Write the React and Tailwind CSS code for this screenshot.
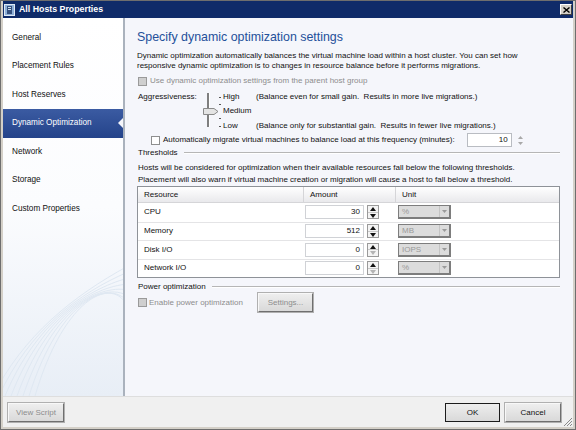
import React from "react";

const NAV = [
  "General",
  "Placement Rules",
  "Host Reserves",
  "Dynamic Optimization",
  "Network",
  "Storage",
  "Custom Properties",
];

const ROWS = [
  { name: "CPU", amount: "30", unit: "%", canDown: true },
  { name: "Memory", amount: "512", unit: "MB", canDown: true },
  { name: "Disk I/O", amount: "0", unit: "IOPS", canDown: false },
  { name: "Network I/O", amount: "0", unit: "%", canDown: false },
];

// ─── small pieces ───

function DisabledCheck() {
  return (
    <span className="inline-block w-[9px] h-[9px] border border-[#9a9a9a] bg-[#cfcfcf] shrink-0" />
  );
}

function Check() {
  return (
    <span className="inline-block w-[9px] h-[9px] border border-[#8e8f8f] bg-white shrink-0" />
  );
}

function Spinner({ canDown }) {
  return (
    <div className="w-[12px] h-[14px] flex flex-col border border-[#9a9a9a] bg-[#f4f4f4]">
      <div className="flex-1 flex items-center justify-center border-b border-[#c8c8c8]">
        <svg width="6" height="4" viewBox="0 0 6 4">
          <path d="M0 4 L3 0 L6 4 Z" fill="#111" />
        </svg>
      </div>
      <div className="flex-1 flex items-center justify-center">
        <svg width="6" height="4" viewBox="0 0 6 4">
          <path d="M0 0 L6 0 L3 4 Z" fill={canDown ? "#111" : "#b4b4b4"} />
        </svg>
      </div>
    </div>
  );
}

function UnitCombo({ value }) {
  return (
    <div className="w-[53px] h-[14px] flex border border-[#7d7d7d] border-r-2 border-b-2 bg-[#dcdcdc]">
      <span className="flex-1 pl-[3px] leading-[12px] text-[#9a9a9a]">{value}</span>
      <span className="w-[10px] flex items-center justify-center border-l border-[#c4c4c4]">
        <svg width="5" height="3" viewBox="0 0 5 3">
          <path d="M0 0 L5 0 L2.5 3 Z" fill="#9a9a9a" />
        </svg>
      </span>
    </div>
  );
}

function GroupHeader({ label }) {
  return (
    <div className="flex items-center h-[12px] pl-[1px]">
      <span className="leading-[12px]">{label}</span>
      <span className="flex-1 ml-[6px] h-[2px] border-t border-[#b6b6b6] border-b border-b-white" />
    </div>
  );
}

function Button({ children, disabled, primary, className = "" }) {
  return (
    <div
      className={
        "h-[19px] flex items-center justify-center bg-gradient-to-b from-[#eeeeee] to-[#d9d9d9] " +
        (primary
          ? "border border-[#1c1c1c] "
          : "border border-[#f8f8f8] border-r-[#6f6f6f] border-b-[#6f6f6f] outline outline-1 outline-[#b0b0b0] ") +
        (disabled ? "text-[#8d8d8d] " : "text-[#111] ") +
        className
      }
    >
      {children}
    </div>
  );
}

// ─── window parts ───

function TitleBar() {
  return (
    <div className="h-[17px] bg-[#0f2b69] flex items-center shrink-0">
      <svg width="11" height="12" viewBox="0 0 11 12" className="ml-[1px]">
        <rect x="0.5" y="0.5" width="10" height="11" fill="#8fb0d8" stroke="#dfe9f5" />
        <rect x="3" y="2" width="5" height="8" fill="#35507e" />
        <rect x="4" y="3" width="3" height="1" fill="#cfe0f2" />
        <rect x="4" y="5" width="3" height="1" fill="#cfe0f2" />
      </svg>
      <span className="ml-[4px] text-white font-bold text-[8.8px] leading-[17px]">
        All Hosts Properties
      </span>
      <div className="ml-auto mr-[1px] w-[12px] h-[11px] bg-[#d4d0c8] border border-white border-r-[#404040] border-b-[#404040] flex items-center justify-center">
        <svg width="7" height="6" viewBox="0 0 7 6">
          <path d="M0.5 0.5 L6.5 5.5 M6.5 0.5 L0.5 5.5" stroke="#000" strokeWidth="1.4" />
        </svg>
      </div>
    </div>
  );
}

function Sidebar() {
  return (
    <div className="relative w-[122px] shrink-0 border-r-2 border-[#aab2bd] bg-gradient-to-b from-white via-[#fbfcfe] to-[#e8eef6] overflow-hidden">
      <svg className="absolute left-0 bottom-0" width="120" height="170" viewBox="0 0 120 170">
        {[0, 6, 12, 18, 24, 30, 36, 42].map((d) => (
          <path
            key={d}
            d={`M${-10 + d} 170 C ${20 + d} ${110 - d}, ${70 + d} ${70 - d / 2}, 125 ${40 + d}`}
            fill="none"
            stroke="#dfe8f2"
            strokeWidth="1"
          />
        ))}
      </svg>
      <div className="relative pt-[5.5px]">
        {NAV.map((item) => {
          const selected = item === "Dynamic Optimization";
          return (
            <div
              key={item}
              className={
                "relative h-[28.5px] flex items-center pl-[9px] " +
                (selected
                  ? "bg-gradient-to-b from-[#3b5ba2] to-[#24438a] text-white"
                  : "text-[#111]")
              }
            >
              <span className="text-[8.2px]">{item}</span>
              {selected && (
                <span className="absolute right-0 top-[9px] w-0 h-0 border-y-[5px] border-y-transparent border-r-[5px] border-r-[#f5f6fb]" />
              )}
            </div>
          );
        })}
      </div>
    </div>
  );
}

function Slider() {
  return (
    <svg width="20" height="38" viewBox="0 0 20 38" className="shrink-0">
      <rect x="4" y="2" width="2" height="34" fill="#7f7f7f" />
      <rect x="6" y="2" width="1" height="34" fill="#ffffff" />
      {[6, 13, 27, 35].map((y) => (
        <rect key={y} x="16" y={y} width="2" height="1" fill="#555" />
      ))}
      <path d="M0.5 17.5 L11 17.5 L15 20.5 L11 23.5 L0.5 23.5 Z" fill="#e4e4e4" stroke="#8a8a8a" />
    </svg>
  );
}

function Content() {
  return (
    <div className="flex-1 bg-[#f5f6fb] pl-[12px] pr-[13px] pt-[11px] flex flex-col">
      <h1 className="text-[12.4px] leading-[16px] text-[#24509a]">
        Specify dynamic optimization settings
      </h1>

      <p className="mt-[6px] leading-[10px]">
        Dynamic optimization automatically balances the virtual machine load within a host cluster. You can set how
        <br />
        responsive dynamic optimization is to changes in resource balance before it performs migrations.
      </p>

      <div className="mt-[4px] h-[12px] flex items-center gap-[3px] pl-[1px]">
        <DisabledCheck />
        <span className="text-[#8d8d8d]">Use dynamic optimization settings from the parent host group</span>
      </div>

      {/* aggressiveness */}
      <div className="mt-[4px] flex pl-[1px]">
        <span className="w-[65px] leading-[12px]">Aggressiveness:</span>
        <Slider />
        <div className="flex flex-col">
          <div className="flex leading-[12px]">
            <span className="w-[33px]">High</span>
            <span>(Balance even for small gain.&nbsp; Results in more live migrations.)</span>
          </div>
          <div className="flex leading-[12px] mt-[2px]">
            <span className="w-[33px]">Medium</span>
          </div>
          <div className="flex leading-[12px] mt-[3px]">
            <span className="w-[33px]">Low</span>
            <span>(Balance only for substantial gain.&nbsp; Results in fewer live migrations.)</span>
          </div>
        </div>
      </div>

      <div className="mt-[1px] h-[14px] flex items-center pl-[14px]">
        <Check />
        <span className="ml-[3px]">
          Automatically migrate virtual machines to balance load at this frequency (minutes):
        </span>
        <div className="ml-[12px] w-[45px] h-[14px] border border-[#b9bcc2] bg-white text-right pr-[3px] leading-[12px]">
          10
        </div>
        <div className="ml-[6px] flex flex-col gap-[3px]">
          <svg width="5" height="3" viewBox="0 0 5 3">
            <path d="M0 3 L2.5 0 L5 3 Z" fill="#a8a8a8" />
          </svg>
          <svg width="5" height="3" viewBox="0 0 5 3">
            <path d="M0 0 L5 0 L2.5 3 Z" fill="#a8a8a8" />
          </svg>
        </div>
      </div>

      <div className="mt-[0px]">
        <GroupHeader label="Thresholds" />
      </div>

      <p className="mt-[3px] leading-[12px] pl-[1px]">
        Hosts will be considered for optimization when their available resources fall below the following thresholds.
        <br />
        Placement will also warn if virtual machine creation or migration will cause a host to fall below a threshold.
      </p>

      {/* thresholds table */}
      <div className="border border-[#8e9298] bg-white">
        <div className="h-[16px] flex bg-gradient-to-b from-white to-[#e9e9ec] border-b border-[#d5d5d8]">
          <div className="w-[166px] pl-[6px] leading-[15px] border-r border-[#d5d5d8]">Resource</div>
          <div className="w-[92px] pl-[6px] leading-[15px] border-r border-[#d5d5d8]">Amount</div>
          <div className="flex-1 pl-[6px] leading-[15px]">Unit</div>
        </div>
        {ROWS.map((r, i) => (
          <div
            key={r.name}
            className={"h-[18.5px] flex items-center " + (i > 0 ? "border-t border-[#e4e4e6]" : "")}
          >
            <div className="w-[166px] pl-[6px]">{r.name}</div>
            <div className="w-[92px] pl-[1px] flex items-center gap-[3px]">
              <div className="w-[59px] h-[14px] border border-[#d0d2d6] bg-white text-right pr-[3px] leading-[12px]">
                {r.amount}
              </div>
              <Spinner canDown={r.canDown} />
            </div>
            <div className="flex-1 pl-[2px]">
              <UnitCombo value={r.unit} />
            </div>
          </div>
        ))}
      </div>

      <div className="mt-[3px]">
        <GroupHeader label="Power optimization" />
      </div>

      <div className="mt-[0px] flex items-center pl-[1px]">
        <DisabledCheck />
        <span className="ml-[2px] text-[#8d8d8d] w-[109px]">Enable power optimization</span>
        <Button disabled className="w-[55px] h-[17px]">
          Settings...
        </Button>
      </div>
    </div>
  );
}

function Footer() {
  return (
    <div className="h-[31px] bg-[#f0f0f0] border-t border-[#dedede] flex items-start pt-[6px] pl-[5px] pr-[12px]">
      <Button disabled className="w-[56px]">
        View Script
      </Button>
      <div className="ml-auto flex gap-[5px]">
        <Button primary className="w-[55px]">
          OK
        </Button>
        <Button className="w-[56px]">Cancel</Button>
      </div>
    </div>
  );
}

export default function App() {
  return (
    <div className="relative w-[576px] h-[430px] bg-[#d4d0c8] border border-[#6e6e6e] px-[2px] pb-[2px] flex flex-col font-['Liberation_Sans',Arial,sans-serif] text-[8px] text-[#111] overflow-hidden">
      <TitleBar />
      <div className="flex-1 flex flex-col">
        <div className="flex h-[378px]">
          <Sidebar />
          <Content />
        </div>
        <Footer />
      </div>
      {/* resize grip */}
      <svg className="absolute right-[3px] bottom-[3px]" width="9" height="9" viewBox="0 0 9 9">
        <path d="M9 1 L1 9 M9 4 L4 9 M9 7 L7 9" stroke="#8a8a8a" strokeWidth="1" />
      </svg>
    </div>
  );
}
